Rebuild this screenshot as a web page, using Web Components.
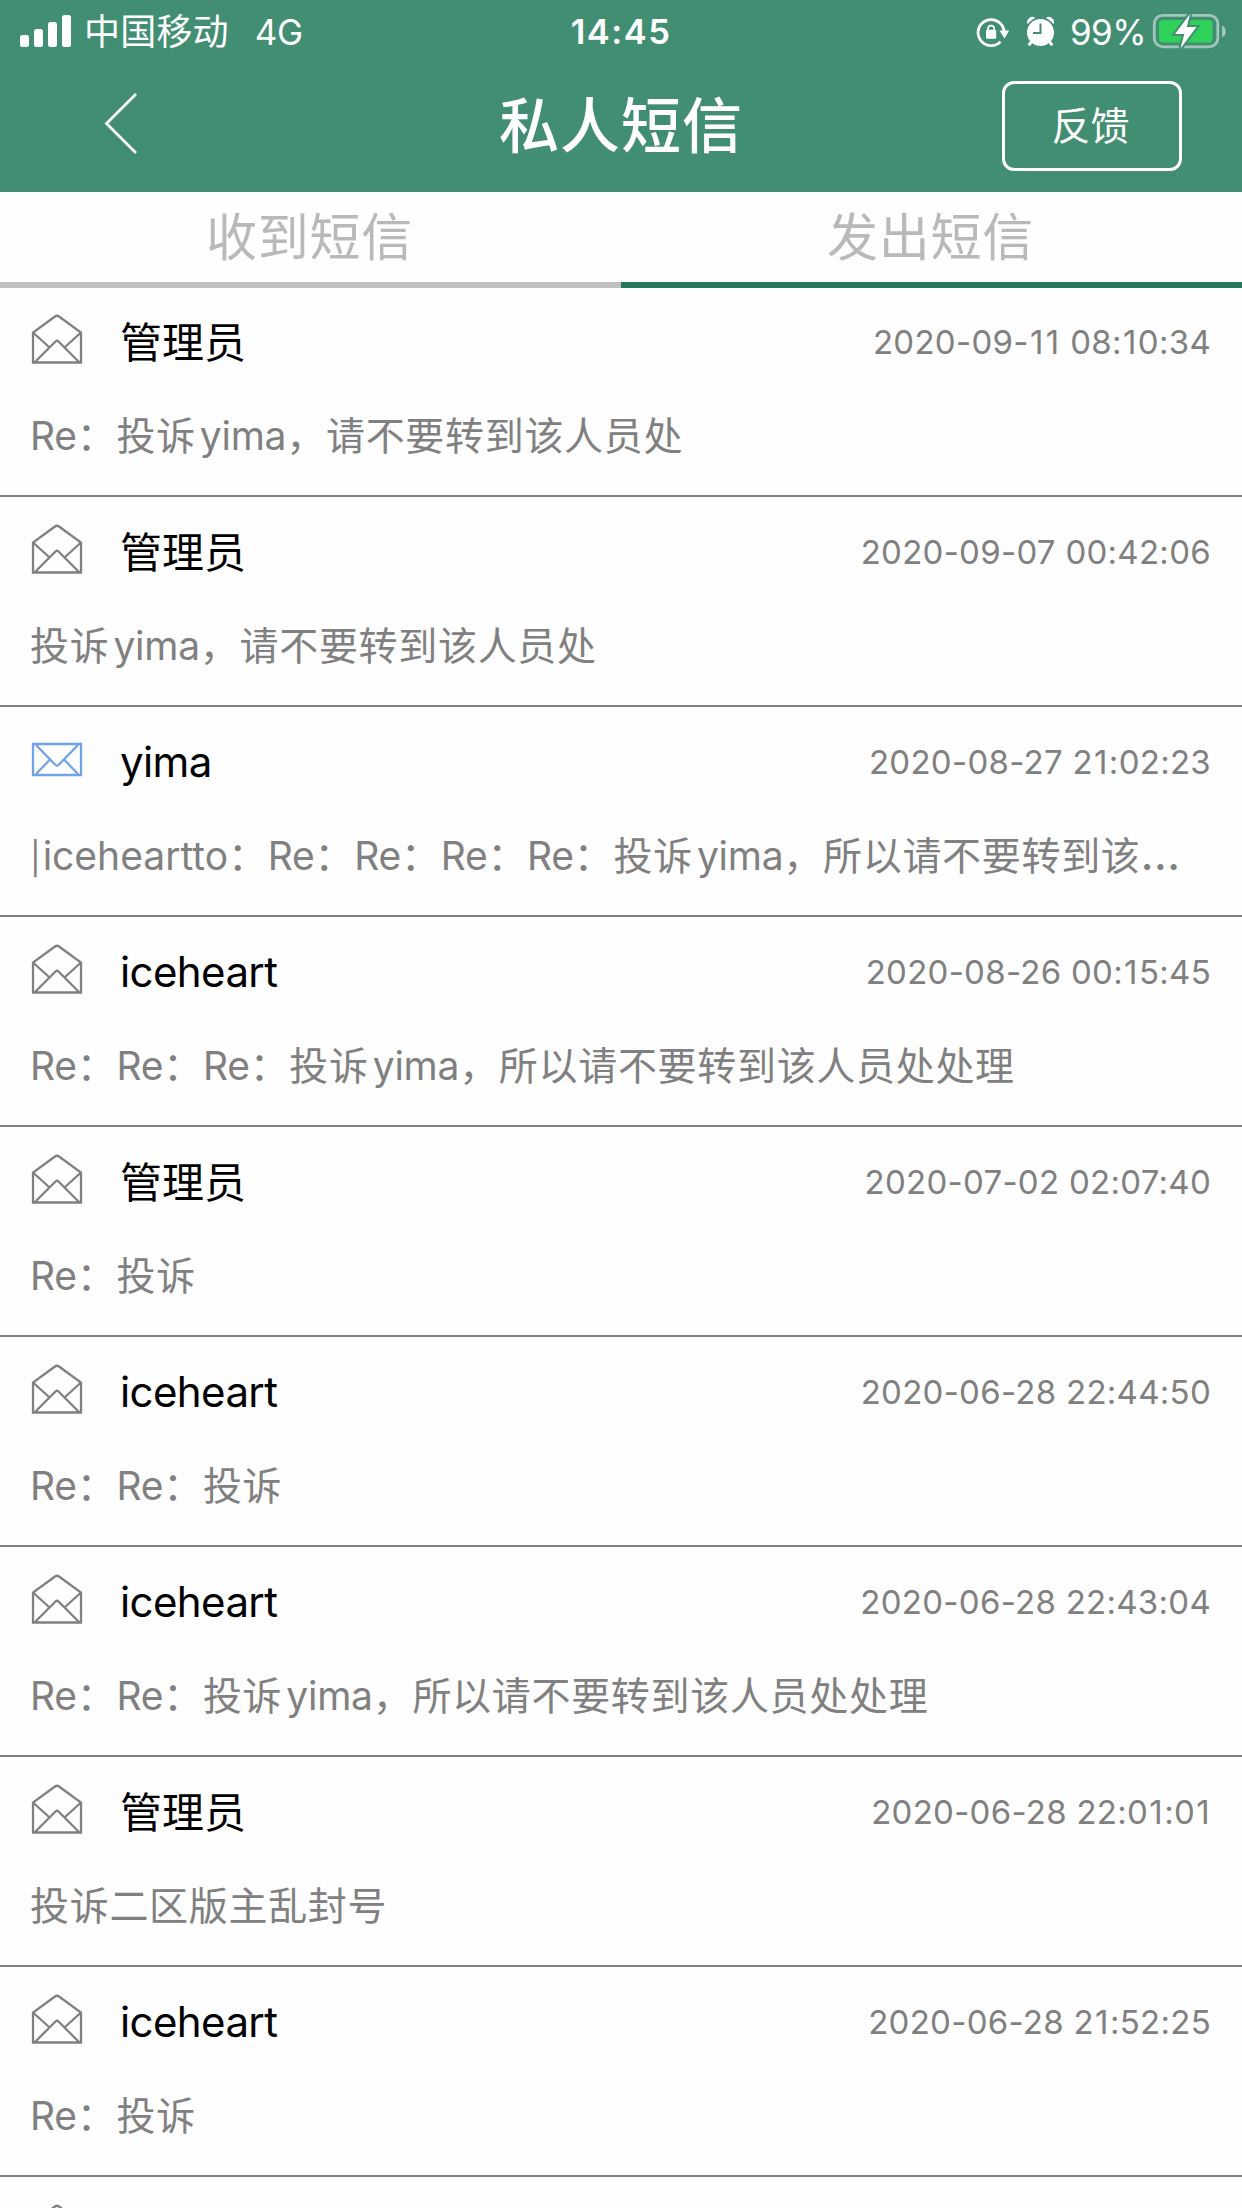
<!DOCTYPE html>
<html lang="zh-CN">
<head>
<meta charset="utf-8">
<title>私人短信</title>
<style>
html,body{margin:0;padding:0}
body{width:1242px;height:2208px;overflow:hidden;background:#fefefe;font-family:Inter,"Noto Sans CJK SC",sans-serif;text-autospace:no-autospace;text-spacing-trim:space-all}
</style>
</head>
<body>
<message-screen></message-screen>
<script>
function define(name, html, setup) {
  const template = document.createElement('template');
  template.innerHTML = html;
  customElements.define(name, class extends HTMLElement {
    constructor() {
      super();
      this.attachShadow({mode: 'open'}).append(template.content.cloneNode(true));
    }
    connectedCallback() { if (setup) setup(this, this.shadowRoot); }
  });
}

define('status-bar', `<style>
:host{display:grid;grid-template-columns:1fr auto 1fr;align-items:center;height:62px;color:#fff;font-size:36px;line-height:62px;white-space:pre}
.left,.right{display:flex;align-items:center;height:62px}
.right{justify-content:flex-end}
svg{display:block;flex:none}
.carrier{margin-left:12px;padding-top:1px;font-size:36px;letter-spacing:.2px}
.net{margin-left:26px;padding-top:1px;font-size:35px;letter-spacing:-.5px}
.time{padding-top:1px;font-weight:600;font-size:34.5px;letter-spacing:1.5px}
.pct{margin:0 6px 0 16px;padding-top:1px;font-size:35px;letter-spacing:-.6px}
</style>
<div class="left">
<svg style="margin-left:20px" width="52" height="62" viewBox="20 0 52 62" fill="#fff"><rect x="20" y="34" width="9" height="12" rx="2.5"/><rect x="34" y="28" width="9" height="18" rx="2.5"/><rect x="48" y="21" width="9" height="25" rx="2.5"/><rect x="62" y="14" width="9" height="32" rx="2.5"/></svg>
<span class="carrier">中国移动</span><span class="net">4G</span>
</div>
<span class="time">14:45</span>
<div class="right">
<svg width="80" height="62" viewBox="975 0 80 62">
<path d="M1005 30A13 13 0 1 0 1001.5 40.600" fill="none" stroke="#fff" stroke-width="2.8"/><path d="M1000.500 29.500h9.700l-4.800 8z" fill="#fff"/>
<rect x="987" y="28.800" width="10.200" height="9" rx="1" fill="#fff"/><path d="M989 29.500v-1.800a3.100 3.100 0 0 1 6.200 0v1.800" fill="none" stroke="#fff" stroke-width="1.7"/>
<circle cx="1041.500" cy="31.500" r="13.500" fill="#fff"/><path d="M1028.800 22.500a4.900 4.900 0 0 1 6.700-5.500M1047.700 17a4.900 4.900 0 0 1 6.600 5.500" fill="#fff" stroke="#fff" stroke-width="1.500"/>
<path d="M1033 40l-3.300 4.300M1050 40l3.300 4.300" stroke="#fff" stroke-width="3"/><path d="M1041.500 22.500v9.500h-7.500" fill="none" stroke="#428e73" stroke-width="2"/></svg>
<span class="pct">99%</span>
<svg style="margin-right:15px" width="75" height="62" viewBox="1152 0 75 62">
<rect x="1154.300" y="14.300" width="63.500" height="31.500" rx="8.500" fill="none" stroke="#a1c7b9" stroke-width="2.800"/><path d="M1222 24.500c5 1.500 5 10.500 0 12z" fill="#a1c7b9"/>
<rect x="1159" y="19" width="53.500" height="22.500" rx="4" fill="#30d158"/><path d="M1190 13l-15 20h9.300l-3.800 14.500 16-21.500h-9.700z" fill="#fff" stroke="#428e73" stroke-width="4" paint-order="stroke"/></svg>
</div>`);

define('outline-button', `<style>
:host{display:flex;align-items:center;justify-content:center;box-sizing:border-box;width:180px;height:90px;border:3px solid #fff;border-radius:12px;color:#fff;font-size:39px;line-height:80px}
slot{display:block;margin-right:3px}
</style><slot></slot>`);

define('nav-bar', `<style>
:host{display:grid;grid-template-columns:1fr auto 1fr;align-items:center;height:128px;color:#fff}
svg{display:block;margin-left:102px}
.title{font-size:60px;font-weight:500;line-height:80px;letter-spacing:1px}
outline-button{justify-self:end;margin-right:60px}
</style>
<svg width="40" height="70" viewBox="102 91 40 70" fill="none" stroke="#fff" stroke-width="2.800"><path d="M136 94l-29.500 29.500L136 153"/></svg>
<span class="title"><slot></slot></span><outline-button>反馈</outline-button>`);

define('tab-item', `<style>
:host{display:flex;flex:1;justify-content:center;box-sizing:border-box;height:96px;padding-right:2px;border-bottom:6px solid #c0c0c0;color:#b9b9b9;font-size:51px;line-height:92px;letter-spacing:.7px}
:host([active]){border-color:#257a5e}
</style><slot></slot>`);

define('mail-icon', `<style>:host{display:block;width:52px;height:52px;color:#808080}:host([unread]){color:#70a4e6}svg{display:block}.closed,:host([unread]) .open{display:none}:host([unread]) .closed{display:block}</style>
<svg class="open" width="52" height="52" viewBox="0 0 52 52" fill="none" stroke="currentColor" stroke-width="2.300"><path d="M2 18.500V48.500H50V18.500L28 2.500Q26 1 24 2.500ZM2 18.500L18 33M50 18.500L34 33M4 48L24.500 27.500Q26 26 27.500 27.500L48 48"/></svg>
<svg class="closed" width="52" height="52" viewBox="0 0 52 52" fill="none" stroke="currentColor" stroke-width="2.300"><path d="M2 10H50V41H2ZM5 11L24.500 31Q26 32.500 27.500 31L47 11M5 40L18.500 26M47 40L33.500 26"/></svg>`);

define('message-row', `<style>
:host{display:block;box-sizing:border-box;height:210px;padding:0 30px;border-bottom:2px solid #808080}
.head{display:flex;height:110px;align-items:center}
mail-icon{margin:-4px 0 0 1px}
.name{flex:1;margin-left:37px;color:#000;font-size:42px;line-height:60px}
.name.cjk{padding-top:2px}
.name:not(.cjk){letter-spacing:-.6px}
.date{margin-right:1px;color:#808080;font-size:33px;line-height:60px;letter-spacing:.28px}
.one{margin:0 1.15px}
.subject{height:80px;margin-top:-1px;line-height:80px;font-size:39px;color:#808080;white-space:nowrap;letter-spacing:.68px}
.latin{letter-spacing:-.25px}
.long{letter-spacing:0}
.after{margin-left:4px}
.bar{font-size:32px;letter-spacing:2px}
.dots{font-size:46px;line-height:0}
</style>
<div class="head"><mail-icon></mail-icon><span class="name"></span><span class="date"></span></div>
<div class="subject"></div>`, (host, root) => {
  const name = root.querySelector('.name');
  name.textContent = host.getAttribute('from');
  name.classList.toggle('cjk', !/[a-z]/.test(name.textContent));
  const piece = (parent, text, cls) => {
    const span = document.createElement('span');
    span.textContent = text;
    if (cls) span.className = cls;
    parent.append(span);
  };
  for (const part of host.getAttribute('date').split(/(1)/)) {
    if (part) piece(root.querySelector('.date'), part, part === '1' ? 'one' : '');
  }
  if (host.hasAttribute('unread')) root.querySelector('mail-icon').setAttribute('unread', '');
  for (const part of host.getAttribute('subject').split(/([a-zA-Z]+|\\||…)/)) {
    if (!part) continue;
    let cls = '';
    if (part.startsWith('|')) cls = 'bar';
    else if (part === '…') cls = 'dots';
    else if (part === 'yima') cls = 'latin after';
    else if (/[a-zA-Z]/.test(part)) cls = part.length > 4 ? 'long' : 'latin';
    piece(root.querySelector('.subject'), part, cls);
  }
});

define('message-screen', `<style>
:host{display:flex;flex-direction:column;height:2208px;overflow:hidden}
header{display:block;height:192px;background:#428e73;flex:none}
nav{display:flex;flex:none}
main{flex:1;margin-top:-1px;min-height:0;overflow:hidden}
</style>
<header><status-bar></status-bar><nav-bar>私人短信</nav-bar></header>
<nav><tab-item>收到短信</tab-item><tab-item active>发出短信</tab-item></nav>
<main>
<message-row from="管理员" date="2020-09-11 08:10:34" subject="Re：投诉yima，请不要转到该人员处"></message-row>
<message-row from="管理员" date="2020-09-07 00:42:06" subject="投诉yima，请不要转到该人员处"></message-row>
<message-row unread from="yima" date="2020-08-27 21:02:23" subject="|iceheartto：Re：Re：Re：Re：投诉yima，所以请不要转到该…"></message-row>
<message-row from="iceheart" date="2020-08-26 00:15:45" subject="Re：Re：Re：投诉yima，所以请不要转到该人员处处理"></message-row>
<message-row from="管理员" date="2020-07-02 02:07:40" subject="Re：投诉"></message-row>
<message-row from="iceheart" date="2020-06-28 22:44:50" subject="Re：Re：投诉"></message-row>
<message-row from="iceheart" date="2020-06-28 22:43:04" subject="Re：Re：投诉yima，所以请不要转到该人员处处理"></message-row>
<message-row from="管理员" date="2020-06-28 22:01:01" subject="投诉二区版主乱封号"></message-row>
<message-row from="iceheart" date="2020-06-28 21:52:25" subject="Re：投诉"></message-row>
<message-row from="" date="" subject=""></message-row>
</main>`);
</script>
</body>
</html>
